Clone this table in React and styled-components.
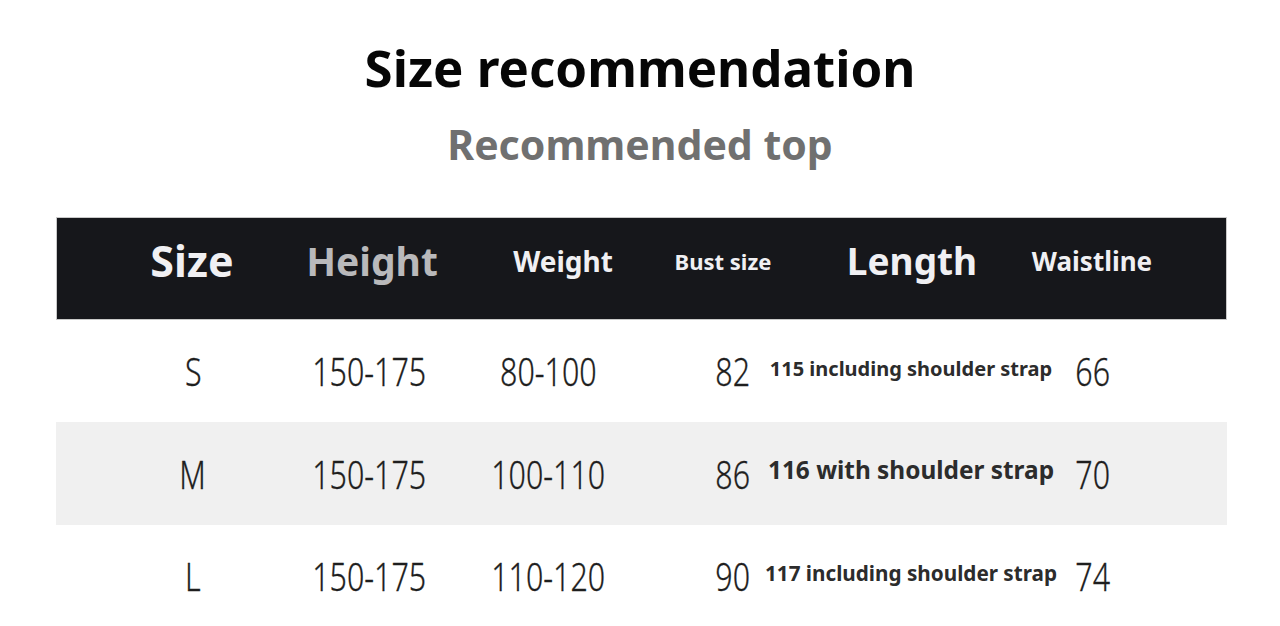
import React from "react";
import styled, { createGlobalStyle } from "styled-components";

const Global = createGlobalStyle`
  html, body { margin: 0; padding: 0; background: #ffffff; }
  body { font-family: "Noto Sans", "Open Sans", sans-serif; }
`;

const Page = styled.div`
  width: 1280px;
  height: 626px;
  overflow: hidden;
  display: flex;
  flex-direction: column;
  align-items: flex-start;
  background: #fff;
`;

const Title = styled.h1`
  align-self: stretch;
  margin: 37px 0 0;
  text-align: center;
  font-size: 51px;
  line-height: 60px;
  font-weight: 700;
  color: #060606;
`;

const Subtitle = styled.h2`
  align-self: stretch;
  margin: 22px 0 0;
  text-align: center;
  font-size: 41px;
  line-height: 50px;
  font-weight: 700;
  color: #707070;
`;

const Table = styled.div`
  margin: 48px 0 0 56px;
  width: 1171px;
  display: flex;
  flex-direction: column;
`;

const Row = styled.div`
  height: ${(p) => p.$h}px;
  box-sizing: border-box;
  padding-left: 45px;
  display: grid;
  grid-template-columns: repeat(6, 180px);
  align-items: center;
  background: ${(p) => p.$bg};
  ${(p) => (p.$head ? "border: 1px solid #c9c9c9; padding-bottom: 16px;" : "")}
`;

const Cell = styled.div`
  display: flex;
  justify-content: center;
  align-items: center;
  white-space: nowrap;
  transform: translate(${(p) => p.$dx || 0}px, ${(p) => p.$dy || 0}px);
`;

const HeadText = styled.span`
  font-weight: 700;
  font-size: ${(p) => p.$size}px;
  color: ${(p) => p.$color || "#f0f0f3"};
  line-height: 1;
`;

const Num = styled.span`
  display: inline-block;
  font-family: "Noto Sans", sans-serif;
  font-weight: 300;
  font-size: 38px;
  line-height: 1;
  color: #1e1e1e;
  transform: scaleX(0.8);
  -webkit-text-stroke: 0.3px #1e1e1e;
`;

const LenText = styled.span`
  font-weight: 700;
  font-size: ${(p) => p.$size}px;
  line-height: 1;
  color: #2c2c2c;
`;

const headers = [
  { t: "Size", s: 43 },
  { t: "Height", s: 39, c: "#b9b9bb" },
  { t: "Weight", s: 28, dx: 11 },
  { t: "Bust size", s: 22, dx: -9 },
  { t: "Length", s: 37 },
  { t: "Waistline", s: 26 },
];

const rows = [
  { size: "S", h: "150-175", w: "80-100", b: "82", l: "115 including shoulder strap", ls: 20, wl: "66", bg: "#ffffff", rh: 102, dy: -2 },
  { size: "M", h: "150-175", w: "100-110", b: "86", l: "116 with shoulder strap", ls: 24.4, wl: "70", bg: "#f0f0f0", rh: 103, dy: -3 },
  { size: "L", h: "150-175", w: "110-120", b: "90", l: "117 including shoulder strap", ls: 20.7, wl: "74", bg: "#ffffff", rh: 101, dy: -2 },
];

export default function App() {
  return (
    <Page>
      <Global />
      <Title>Size recommendation</Title>
      <Subtitle>Recommended top</Subtitle>
      <Table>
        <Row $h={103} $bg="#16171b" $head>
          {headers.map((h) => (
            <Cell key={h.t} $dx={h.dx}>
              <HeadText $size={h.s} $color={h.c}>{h.t}</HeadText>
            </Cell>
          ))}
        </Row>
        {rows.map((r) => (
          <Row key={r.size} $h={r.rh} $bg={r.bg}>
            <Cell $dx={2}><Num>{r.size}</Num></Cell>
            <Cell $dx={-2}><Num>{r.h}</Num></Cell>
            <Cell $dx={-3}><Num>{r.w}</Num></Cell>
            <Cell $dx={2}><Num>{r.b}</Num></Cell>
            <Cell $dy={r.dy}><LenText $size={r.ls}>{r.l}</LenText></Cell>
            <Cell $dx={2}><Num>{r.wl}</Num></Cell>
          </Row>
        ))}
      </Table>
    </Page>
  );
}
